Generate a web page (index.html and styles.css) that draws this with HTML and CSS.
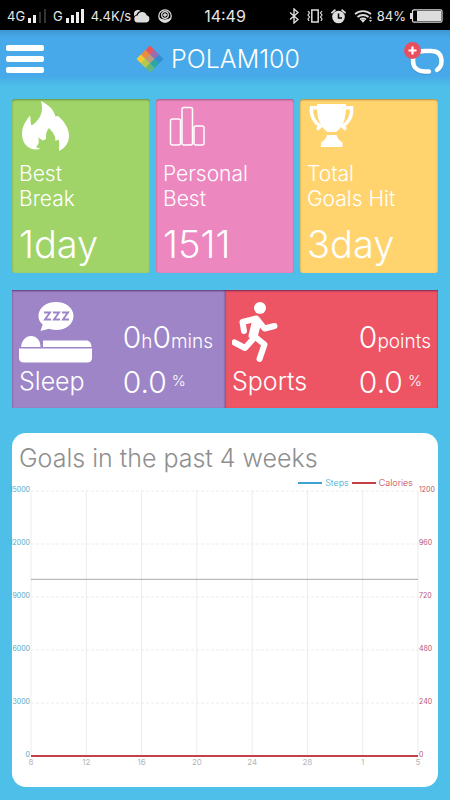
FILE: index.html
```html
<!DOCTYPE html>
<html lang="en">

<head>
    <meta charset="UTF-8">
    <meta name="viewport" content="width=device-width, initial-scale=1.0">
    <title>POLAM100</title>
    <link rel="stylesheet" href="styles.css">
</head>

<body>
    <!-- Status bar -->
    <div class="status-bar">
        <div class="status-left">
            <span>4G</span>
            <svg class="signal" width="19" height="14" viewBox="0 0 19 14">
                <path fill="#eee" d="M0 9h3v5H0zM5 6h3v8H5z" />
                <path fill="#333" d="M11 3h2v11h-2zM16 0h2v14h-2z" />
            </svg>
            <span>G</span>
            <svg class="signal" width="19" height="14" viewBox="0 0 19 14">
                <path fill="#eee" d="M0 9h3v5H0zM5 6h3v8H5zM10 3h3v11h-3zM15 0h3v14h-3z" />
            </svg>
            <span>4.4K/s</span>
            <svg width="16" height="13" viewBox="0 0 16 13">
                <path fill="#ddd" d="M4 12.500a3.500 3.500 0 0 1-.4-7 4.700 4.700 0 0 1 9-.2A3.700 3.700 0 0 1 12.500 12.500z" />
                <path fill="#ddd" d="M0 5a4 4 0 0 1 6.500-4C4 1.600 3 3 2.700 4.600 1.700 5 1 5.600.7 6.600z" />
            </svg>
            <svg class="sync" width="14" height="14" viewBox="0 0 14 14">
                <circle cx="7" cy="7" r="6.200" fill="none" stroke="#ddd" stroke-width="1.300" />
                <circle cx="7" cy="6" r="3.300" fill="none" stroke="#ddd" stroke-width="1.300" />
                <path stroke="#ddd" stroke-width="1.300" d="M7 4v4M5 6h4" fill="none" />
                <path fill="#ddd" d="M1 8.500c4 2.500 8 2.500 12 0-1 3.500-3.500 5-6 5s-5-1.500-6-5z" />
            </svg>
        </div>
        <span class="time">14:49</span>
        <div class="status-right">
            <svg width="10" height="16" viewBox="0 0 10 16">
                <path fill="none" stroke="#ddd" stroke-width="1.400" d="M1 4.500l8 7L5 15V1l4 3.500-8 7" />
            </svg>
            <svg width="16" height="14" viewBox="0 0 16 14">
                <path fill="none" stroke="#ddd" stroke-width="1.500" d="M4.800 1h6.400v12H4.800z" />
                <path fill="none" stroke="#ddd" stroke-width="1.200" d="M1 2l1.500 2L1 6l1.500 2L1 10l1 2M15 2l-1.500 2L15 6l-1.500 2L15 10l-1 2" />
            </svg>
            <svg width="15" height="15" viewBox="0 0 15 15">
                <circle cx="7.500" cy="8" r="6.300" fill="#ddd" />
                <path fill="none" stroke="#ddd" stroke-width="1.800" stroke-linecap="round" d="M1 3.600L3.800 1.200M14 3.600L11.200 1.200" />
                <path fill="none" stroke="#000" stroke-width="1.500" d="M7.500 4.500V9H11" />
            </svg>
            <svg width="19" height="14" viewBox="0 0 19 14">
                <path fill="none" stroke="#ddd" stroke-width="1.800" d="M1 5.200a12 12 0 0 1 16 0M3.500 8a8.500 8.500 0 0 1 11 0M6 10.500a5 5 0 0 1 6 0" />
                <path fill="#ddd" d="M6.800 11.200a3.500 3.500 0 0 1 4.400 0L9 13.800zM15 9.500l1.500-2 1.500 2zM15 11l1.500 2 1.500-2z" />
            </svg>
            <span>84%</span>
            <svg class="battery" width="33" height="14" viewBox="0 0 33 14">
                <path fill="#ddd" d="M0 4h2v6H0z" />
                <rect x="2.500" y=".8" width="29.500" height="12.400" rx="1.500" fill="none" stroke="#ddd" stroke-width="1.200" />
                <path fill="#ddd" d="M7 2h24v10H7z" />
            </svg>
        </div>
    </div>

    <!-- Header -->
    <header class="header">
        <button class="menu-btn" aria-label="Menu">
            <span class="bar"></span>
            <span class="bar"></span>
            <span class="bar"></span>
        </button>
        <h1 class="title">
            <svg width="28" height="28" viewBox="0 0 28 28">
                <g transform="translate(14 0.500) rotate(45)">
                    <path fill="#e9575b" d="M0 0h6.400v6.400H0z" />
                    <path fill="#9a6bb0" d="M6.400 0h6.400v6.400H6.400z" />
                    <path fill="#2f8fd0" d="M12.800 0h6.300v6.400h-6.300z" />
                    <path fill="#ef8b3c" d="M0 6.400h6.400v6.400H0z" />
                    <path fill="#bd9a7a" d="M6.400 6.400h6.400v6.400H6.400z" />
                    <path fill="#2ba8a4" d="M12.800 6.400h6.300v6.400h-6.300z" />
                    <path fill="#f5c92f" d="M0 12.800h6.400v6.300H0z" />
                    <path fill="#b8c94a" d="M6.400 12.800h6.400v6.300H6.400z" />
                    <path fill="#62b879" d="M12.800 12.800h6.300v6.300h-6.300z" />
                </g>
            </svg>
            <span>POLAM100</span>
        </h1>
        <button class="band-btn" aria-label="Add band">
            <svg width="40" height="34" viewBox="0 0 40 34">
                <path fill="none" stroke="#2f7fb8" stroke-opacity=".5" stroke-width="4.500" stroke-linecap="round" d="M25 30.500h-4c-6 0-12.500-3-12.500-11S14 9.500 21 9.500h6c7.500 0 10.500 4 10.500 10.500 0 3.500-1 6-4 8.500" />
                <path fill="none" stroke="#fff" stroke-width="4.500" stroke-linecap="round" d="M25 29.500h-4c-6 0-12-3-12-10.500S14 9 21 9h6c7.500 0 10.500 4 10.500 10.500 0 3.500-1 6-4.500 8.500" />
                <path stroke="#47a9e9" stroke-width="2" d="M27 26.500l3.500 6.500" />
                <circle cx="8.500" cy="8.500" r="8.500" fill="#e8505f" />
                <path stroke="#fff" stroke-width="2.200" d="M8.500 4.500v8M4.500 8.500h8" />
            </svg>
        </button>
    </header>

    <main class="container">
        <!-- Best results -->
        <section class="cards">
            <div class="card card-green">
                <svg class="card-icon" width="50" height="50" viewBox="0 0 50 50">
                    <path fill="#fff" d="M22 0c8 4 13 9 14.500 15.500L39 15c6 5 11 12 11 20 0 7-4 12-10 15 0-5 1-8-.5-11.500L36.500 40c0-6-3-9-6.500-13-3 3-3 7-3 11l-3 1.500-5-3c2 5 0 7-2 9.500L21.500 48C10 50.500 3 43 3 33c0-8 4-13 8-18.500 1 4 0 6.500 1.500 10C21 19 25 11 22 0z" />
                </svg>
                <h2>Best<br>Break</h2>
                <p class="card-value">1day</p>
            </div>
            <div class="card card-pink">
                <svg class="card-icon" width="50" height="50" viewBox="0 0 50 50">
                    <g fill="none" stroke="#fff" stroke-width="1.500">
                        <rect x="7.500" y="18" width="10" height="26" rx="2" />
                        <rect x="19" y="6.500" width="10.500" height="37.500" rx="2" />
                        <rect x="31" y="25" width="10" height="19" rx="2" />
                    </g>
                </svg>
                <h2>Personal<br>Best</h2>
                <p class="card-value">1511</p>
            </div>
            <div class="card card-yellow">
                <svg class="card-icon" width="50" height="50" viewBox="0 0 50 50">
                    <path fill="#fff" d="M10 3h29v4c0 10-3 19-10 24h-8.500C13 26 10 17 10 7z" />
                    <path fill="none" stroke="#fff" stroke-width="3.500" d="M12 6.800H4.500c-1 8 3 15 9 18.500l-3.500 3M37 6.800h7.500c1 8-3 15-9 18.500l3.500 3" />
                    <path fill="#fff" d="M20 34h9.500c1 4 3 5.500 6 7.500V46H14v-4.500c3-2 5-3.500 6-7.500z" />
                </svg>
                <h2>Total<br>Goals Hit</h2>
                <p class="card-value">3day</p>
            </div>
        </section>

        <!-- Sleep and sports -->
        <section class="panels">
            <div class="panel panel-sleep">
                <div class="panel-name">
                    <svg width="73" height="62" viewBox="0 0 73 62">
                        <path fill="#fff" d="M37 0c10 0 17.500 6 17.500 14S47 28 37 28c-3 0-5-.5-7-1.200L21.500 29l2.200-6.500C20.500 20 19.500 17 19.500 14 19.500 6 27 0 37 0z" />
                        <path fill="none" stroke="#9d85c8" stroke-width="1.900" d="M25 10.500h6l-5 7h6M34 10.500h6l-5 7h6M43 10.500h6l-5 7h6" />
                        <path fill="#fff" d="M2 45c1-7 4.500-11 10-11s9.500 4 9.500 11zM24 38.500h43c3.500 0 5.500 2.500 5.500 6.500H24zM0 46.500h73V56c0 3-2 4.500-5 4.500H5c-3 0-5-1.500-5-4.500z" />
                    </svg>
                    <h3>Sleep</h3>
                </div>
                <div class="panel-values">
                    <p>0<span class="unit">h</span>0<span class="unit">mins</span></p>
                    <p>0.0<span class="percent">%</span></p>
                </div>
            </div>
            <div class="panel panel-sports">
                <div class="panel-name">
                    <svg width="48" height="62" viewBox="0 0 48 62">
                        <circle cx="28" cy="6" r="6" fill="#fff" />
                        <path fill="none" stroke="#fff" stroke-width="6" stroke-linecap="round" stroke-linejoin="round" d="M12 29l-1.500-9 14-3.500 8 10 10-2.500M27.500 57l5-14.500-11-9M2.500 40.500l10.500 5.500 9-10" />
                        <path fill="#fff" stroke="#fff" stroke-width="4" stroke-linejoin="round" d="M22.500 17l5 3-4 15-5-1z" />
                    </svg>
                    <h3>Sports</h3>
                </div>
                <div class="panel-values">
                    <p>0<span class="unit">points</span></p>
                    <p>0.0<span class="percent">%</span></p>
                </div>
            </div>
        </section>

        <!-- Chart -->
        <section class="chart-box">
            <h2>Goals in the past 4 weeks</h2>
            <div class="legend">
                <span class="legend-item steps">Steps</span>
                <span class="legend-item calories">Calories</span>
            </div>
            <div class="chart">
                <div class="axis axis-left">
                    <span>15000</span>
                    <span>12000</span>
                    <span>9000</span>
                    <span>6000</span>
                    <span>3000</span>
                    <span>0</span>
                </div>
                <svg class="plot" width="100%" height="100%">
                    <g stroke="#ececec">
                        <line x1="0" x2="0" y1="0" y2="100%" />
                        <line x1="14.286%" x2="14.286%" y1="0" y2="100%" />
                        <line x1="28.571%" x2="28.571%" y1="0" y2="100%" />
                        <line x1="42.857%" x2="42.857%" y1="0" y2="100%" />
                        <line x1="57.143%" x2="57.143%" y1="0" y2="100%" />
                        <line x1="71.429%" x2="71.429%" y1="0" y2="100%" />
                        <line x1="85.714%" x2="85.714%" y1="0" y2="100%" />
                        <line x1="100%" x2="100%" y1="0" y2="100%" />
                    </g>
                    <g stroke="#ececec" stroke-dasharray="3 2">
                        <line x1="0" x2="100%" y1="0" y2="0" />
                        <line x1="0" x2="100%" y1="20%" y2="20%" />
                        <line x1="0" x2="100%" y1="40%" y2="40%" />
                        <line x1="0" x2="100%" y1="60%" y2="60%" />
                        <line x1="0" x2="100%" y1="80%" y2="80%" />
                    </g>
                    <line x1="0" x2="100%" y1="33.333%" y2="33.333%" stroke="#aaa" />
                    <line x1="0" x2="100%" y1="100%" y2="100%" stroke="#c4404a" stroke-width="2" />
                </svg>
                <div class="axis axis-right">
                    <span>1200</span>
                    <span>960</span>
                    <span>720</span>
                    <span>480</span>
                    <span>240</span>
                    <span>0</span>
                </div>
                <div class="axis-bottom">
                    <span>8</span>
                    <span>12</span>
                    <span>16</span>
                    <span>20</span>
                    <span>24</span>
                    <span>28</span>
                    <span>1</span>
                    <span>5</span>
                </div>
            </div>
        </section>
    </main>
</body>

</html>
```

FILE: styles.css
```css
* {
    box-sizing: border-box;
}

body {
    margin: 0;
    background-color: #4dbfe8;
    font-family: Inter, "Liberation Sans", sans-serif;
    font-weight: 300;
    color: #fff;
}

h1,
h2,
h3,
p {
    margin: 0;
    font-weight: 300;
}

svg {
    display: block;
    flex-shrink: 0;
}

button {
    padding: 0;
    background: none;
    border: none;
    cursor: pointer;
}

/* Status bar */

.status-bar {
    display: grid;
    grid-template-columns: 1fr auto 1fr;
    align-items: center;
    height: 30px;
    padding: 2px 7px 0;
    background-color: #000;
    color: #e6e6e6;
    font-size: 13px;
    font-weight: 400;
}

.status-left,
.status-right {
    display: flex;
    align-items: center;
    gap: 3px;
}

.status-left .signal {
    margin-right: 3px;
}

.status-left .sync {
    margin-left: 5px;
}

.status-right {
    justify-content: flex-end;
    gap: 8px;
}

.status-right .battery {
    margin-left: -4px;
}

.status-right span {
    margin-left: -4px;
}

.time {
    font-size: 16px;
}

/* Header */

.header {
    display: flex;
    justify-content: space-between;
    align-items: center;
    height: 57px;
    padding: 0 6px;
    background: linear-gradient(#3f97d3, #47a9e9 8px, #47a9e9 46px, #4dbfe8);
}

.menu-btn {
    display: flex;
    flex-direction: column;
    gap: 5px;
    width: 38px;
}

.bar {
    height: 6px;
    border-radius: 2px;
    background-color: #fff;
}

.title {
    display: flex;
    align-items: center;
    gap: 7px;
    padding-right: 12px;
    font-size: 25px;
    line-height: 30px;
}

/* Best results */

.container {
    padding: 12px 12px 13px;
}

.cards {
    display: grid;
    grid-template-columns: repeat(3, 1fr);
    gap: 6px;
}

.card {
    height: 174px;
    padding: 2px 7px;
    border-radius: 3px;
    box-shadow: inset 0 1px 2px rgba(0, 0, 0, 0.35);
}

.card-green {
    background-color: #a0d468;
}

.card-pink {
    background-color: #ec87c0;
}

.card-yellow {
    background-color: #ffd46e;
}

.card h2 {
    margin-top: 10px;
    font-size: 21px;
    line-height: 25px;
}

.card-value {
    margin-top: 10px;
    font-size: 38px;
    line-height: 46px;
}

/* Sleep and sports */

.panels {
    display: grid;
    grid-template-columns: 1fr 1fr;
    margin-top: 17px;
}

.panel {
    display: flex;
    justify-content: space-between;
    height: 118px;
    padding: 12px 7px 0;
    box-shadow: inset 0 1px 2px rgba(40, 0, 60, 0.6);
}

.panel-sleep {
    padding-right: 12px;
    background-color: #9d85c8;
}

.panel-sports {
    background-color: #ed5565;
}

.panel h3 {
    font-size: 25px;
    line-height: 34px;
}

.panel-values {
    padding-top: 15px;
    font-size: 30px;
    line-height: 40px;
}

.unit {
    font-size: 19px;
}

.percent {
    margin-left: 5px;
    font-size: 15px;
    vertical-align: 7px;
    line-height: 15px;
}

/* Chart */

.chart-box {
    margin-top: 25px;
    padding: 8px 0 19px;
    border-radius: 14px;
    background-color: #fff;
    color: #8f8f8f;
}

.chart-box h2 {
    padding: 0 7px;
    font-size: 25px;
    line-height: 34px;
}

.legend {
    display: flex;
    justify-content: flex-end;
    gap: 3px;
    padding-right: 25px;
    font-size: 9px;
    line-height: 16px;
}

.legend-item {
    display: flex;
    align-items: center;
    gap: 3px;
}

.legend-item::before {
    content: "";
    width: 24px;
    height: 2px;
    background-color: currentColor;
}

.steps {
    color: #3da5cf;
}

.calories {
    color: #c4404a;
}

.chart {
    display: grid;
    grid-template-columns: 19px 1fr 20px;
    grid-template-rows: 265px 12px;
    font-size: 7px;
    font-weight: 400;
}

.plot {
    overflow: visible;
}

.axis {
    display: flex;
    flex-direction: column;
    justify-content: space-between;
    margin: -5px 0 -3px;
    line-height: 8px;
}

.axis-left {
    align-items: flex-end;
    padding-right: 1px;
    color: #58aac4;
}

.axis-right {
    padding-left: 1px;
    color: #bb5570;
}

.axis-bottom {
    display: flex;
    grid-column: 2;
    justify-content: space-between;
    margin: 0 -6px;
    color: #b5b5b5;
    font-size: 8px;
    line-height: 12px;
}

.axis-bottom span {
    width: 12px;
    text-align: center;
}
```
